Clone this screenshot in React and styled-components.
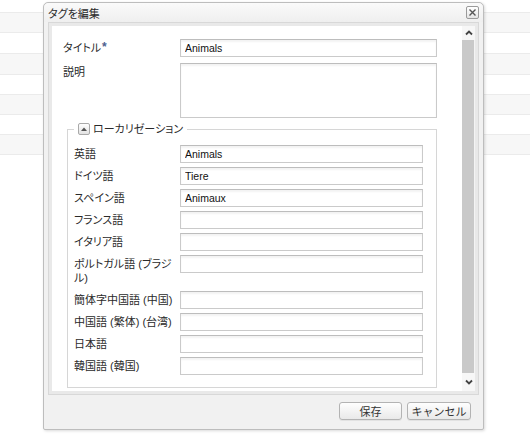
import React from 'react'
import styled, { createGlobalStyle } from 'styled-components'

const GlobalStyle = createGlobalStyle`
  body {
    margin: 0;
    background: #fff;
    font-family: "Liberation Sans", "Noto Sans CJK JP", sans-serif;
    font-size: 11px;
    color: #222;
    font-feature-settings: "palt";
  }
`

const Page = styled('div')`
  position: relative;
  width: 530px;
  height: 436px;
  overflow: hidden;
`
const Row = styled('div')`
  height: ${p => p.$h}px;
  box-sizing: border-box;
  background: ${p => (p.$alt ? '#f7f7f7' : '#fff')};
  border-bottom: 1px solid #ebebeb;
`
const Dialog = styled('div')`
  position: absolute;
  left: 43px;
  top: 2px;
  width: 441px;
  height: 428px;
  box-sizing: border-box;
  display: flex;
  flex-direction: column;
  background: #f1f1f1;
  border: 1px solid #bdbdbd;
  border-radius: 5px 5px 2px 2px;
  box-shadow: 1px 1px 3px rgba(0, 0, 0, 0.15);
`
const TitleBar = styled('div')`
  height: 19px;
  display: flex;
  align-items: center;
  justify-content: space-between;
  padding: 0 4px;
  background: linear-gradient(#fafafa, #efefef);
  border-radius: 5px 5px 0 0;
`
const Title = styled('span')`
  font-size: 11px;
  color: #2a2a2a;
`
const CloseButton = styled('button')`
  width: 13px;
  height: 13px;
  padding: 0;
  display: flex;
  align-items: center;
  justify-content: center;
  box-sizing: border-box;
  border: 1px solid #9a9a9a;
  border-radius: 2px;
  background: linear-gradient(#ffffff, #e4e4e4);
`
const Frame = styled('div')`
  margin: 0 4px;
  height: 373px;
  box-sizing: border-box;
  display: flex;
  padding: 3px;
  background: #e9e9e9;
  border: 1px solid #d8d8d8;
`
const Content = styled('div')`
  width: 410px;
  box-sizing: border-box;
  padding: 13px 25px 0 11px;
  background: #fff;
  overflow: hidden;
`
const ScrollBar = styled('div')`
  width: 13px;
  display: flex;
  flex-direction: column;
  background: #f4f4f4;
`
const ScrollArrow = styled('div')`
  height: ${p => p.$h}px;
  display: flex;
  align-items: center;
  justify-content: center;
  background: #f7f7f7;
`
const Thumb = styled('div')`
  flex: 1;
  margin: 0 1px 0 0;
  background: #c9c9c9;
`
const FormRow = styled('div')`
  display: flex;
  align-items: flex-start;
  margin-bottom: ${p => p.$gap ?? 4}px;
`
const Label = styled('label')`
  flex: 0 0 ${p => p.$w}px;
  box-sizing: border-box;
  padding: 2px 6px 2px 0;
  line-height: 14px;
  font-size: 11px;
  color: #2a2a2a;
`
const Required = styled('span')`
  font-size: 12px;
  font-weight: bold;
  color: #4d6190;
  vertical-align: top;
  line-height: 12px;
  margin-left: 1px;
`
const Input = styled('input')`
  flex: 1;
  min-width: 0;
  height: 18px;
  box-sizing: border-box;
  margin: 0;
  padding: 0 4px;
  font-family: "Liberation Sans", sans-serif;
  font-size: 10.5px;
  color: #111;
  background: #fff;
  border: 1px solid #cacaca;
  border-top-color: #bdbdbd;
  box-shadow: inset 0 2px 2px rgba(0, 0, 0, 0.05);
  outline: none;
`
const TextArea = styled('textarea')`
  flex: 1;
  display: block;
  height: 55px;
  box-sizing: border-box;
  margin: 0;
  padding: 2px 4px;
  resize: none;
  background: #fff;
  border: 1px solid #cacaca;
  border-top-color: #bdbdbd;
  box-shadow: inset 0 2px 2px rgba(0, 0, 0, 0.05);
  outline: none;
`
const FieldSet = styled('fieldset')`
  margin: 4px 0 0 4px;
  padding: 9px 13px 12px 6px;
  border: 1px solid #d6d6d6;
  min-width: 0;
`
const Legend = styled('legend')`
  display: flex;
  align-items: center;
  padding: 0 4px;
  line-height: 14px;
  font-size: 11px;
  color: #2a2a2a;
`
const Toggle = styled('span')`
  width: 12px;
  height: 12px;
  box-sizing: border-box;
  display: flex;
  align-items: center;
  justify-content: center;
  margin-right: 3px;
  border: 1px solid #a9a9a9;
  border-radius: 2px;
  background: linear-gradient(#ffffff, #e2e2e2);
`
const Footer = styled('div')`
  flex: 1;
  display: flex;
  justify-content: flex-end;
  align-items: flex-start;
  gap: 5px;
  padding: 7px 12px 0 0;
`
const Button = styled('button')`
  width: ${p => p.$w}px;
  height: 18px;
  padding: 0;
  font-family: "Liberation Sans", "Noto Sans CJK JP", sans-serif;
  font-size: 11px;
  color: #333;
  border: 1px solid #b3b3b3;
  border-radius: 3px;
  background: linear-gradient(#fefefe, #e9e9e9);
  box-shadow: 0 1px 0 rgba(0, 0, 0, 0.06);
`

const Chevron = ({ down }) => (
  <svg width="8" height="6" viewBox="0 0 8 6">
    <polyline
      points={down ? '1,1.5 4,4.5 7,1.5' : '1,4.5 4,1.5 7,4.5'}
      fill="none"
      stroke="#444"
      strokeWidth="1.8"
    />
  </svg>
)

const rows = [13, 20, 21, 21, 20, 20, 20, 20]

const locales = [
  ['英語', 'Animals'],
  ['ドイツ語', 'Tiere'],
  ['スペイン語', 'Animaux'],
  ['フランス語', ''],
  ['イタリア語', ''],
  ['ポルトガル語 (ブラジル)', ''],
  ['簡体字中国語 (中国)', ''],
  ['中国語 (繁体) (台湾)', ''],
  ['日本語', ''],
  ['韓国語 (韓国)', ''],
]

const App = () => (
  <Page>
    <GlobalStyle />
    {rows.map((h, i) => (
      <Row key={i} $h={h} $alt={i % 2 === 1} />
    ))}
    <Dialog>
      <TitleBar>
        <Title>タグを編集</Title>
        <CloseButton aria-label="閉じる">
          <svg width="9" height="9" viewBox="0 0 9 9">
            <path d="M1.5 1.5 L7.5 7.5 M7.5 1.5 L1.5 7.5" stroke="#555" strokeWidth="1.4" />
          </svg>
        </CloseButton>
      </TitleBar>
      <Frame>
        <Content>
          <FormRow $gap={6}>
            <Label $w={117}>
              タイトル<Required>*</Required>
            </Label>
            <Input defaultValue="Animals" />
          </FormRow>
          <FormRow $gap={0}>
            <Label $w={117}>説明</Label>
            <TextArea />
          </FormRow>
          <FieldSet>
            <Legend>
              <Toggle>
                <svg width="6" height="4" viewBox="0 0 6 4">
                  <polygon points="0,4 3,0.5 6,4" fill="#555" />
                </svg>
              </Toggle>
              ローカリゼーション
            </Legend>
            {locales.map(([label, value], i) => (
              <FormRow key={label} $gap={i === locales.length - 1 ? 0 : 4}>
                <Label $w={106}>{label}</Label>
                <Input defaultValue={value} />
              </FormRow>
            ))}
          </FieldSet>
        </Content>
        <ScrollBar>
          <ScrollArrow $h={14}>
            <Chevron />
          </ScrollArrow>
          <Thumb />
          <ScrollArrow $h={18}>
            <Chevron down />
          </ScrollArrow>
        </ScrollBar>
      </Frame>
      <Footer>
        <Button $w={63}>保存</Button>
        <Button $w={64}>キャンセル</Button>
      </Footer>
    </Dialog>
  </Page>
)

export default App
